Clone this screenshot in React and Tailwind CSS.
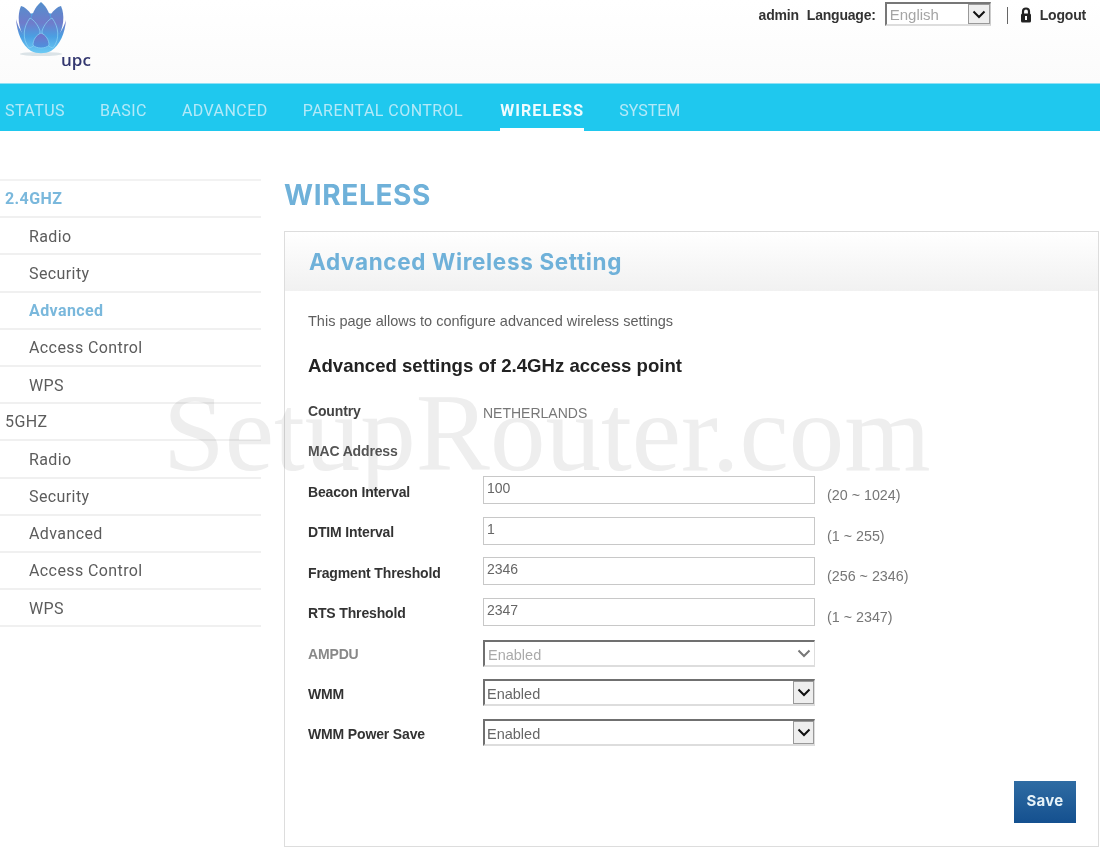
import { useState } from "react";

const navItems = ["STATUS", "BASIC", "ADVANCED", "PARENTAL CONTROL", "WIRELESS", "SYSTEM"];

const sideMenu = [
  { label: "2.4GHZ", top: true, active: true },
  { label: "Radio" },
  { label: "Security" },
  { label: "Advanced", active: true },
  { label: "Access Control" },
  { label: "WPS" },
  { label: "5GHZ", top: true },
  { label: "Radio" },
  { label: "Security" },
  { label: "Advanced" },
  { label: "Access Control" },
  { label: "WPS" },
];

const inputs = [
  { label: "Beacon Interval", value: "100", hint: "(20 ~ 1024)" },
  { label: "DTIM Interval", value: "1", hint: "(1 ~ 255)" },
  { label: "Fragment Threshold", value: "2346", hint: "(256 ~ 2346)" },
  { label: "RTS Threshold", value: "2347", hint: "(1 ~ 2347)" },
];

function Logo() {
  return (
    <svg width="68" height="60" viewBox="0 0 68 60" className="block">
      <defs>
        <linearGradient id="petal" gradientUnits="userSpaceOnUse" x1="0" y1="0" x2="0" y2="52">
          <stop offset="0" stopColor="#5190cc" />
          <stop offset="0.42" stopColor="#6f7ccb" />
          <stop offset="0.68" stopColor="#4a9fe2" />
          <stop offset="1" stopColor="#6ccaf4" />
        </linearGradient>
        <linearGradient id="front" x1="0" y1="0" x2="0" y2="1">
          <stop offset="0" stopColor="#7470c8" />
          <stop offset="1" stopColor="#4b92de" />
        </linearGradient>
      </defs>
      <ellipse cx="25" cy="53" rx="21" ry="2" fill="#dbe3e7" />
      {/* fill between the petals */}
      <path d="M7 16C12 10 38 10 43 16C47 28 40 46 25 50C10 46 3 28 7 16Z" fill="#4f9fe0" />
      {/* outer tips and cup */}
      <path d="M0 18C1 32 6 44 15 50C21 53 29 53 35 50C44 44 49 32 50 19C47 29 41 40 25 44C9 40 3 29 0 18Z" fill="url(#petal)" />
      {/* back petals */}
      <path d="M25 1C19 6 15 14 15 22C15 30 20 36 25 36C30 36 35 30 35 22C35 14 31 6 25 1Z" fill="url(#petal)" />
      <path d="M5 5C1 14 2 27 9 38C14 36 16 22 15 13C12 9 9 6 5 5Z" fill="url(#petal)" />
      <path d="M45 5C49 14 48 27 41 38C36 36 34 22 35 13C38 9 41 6 45 5Z" fill="url(#petal)" />
      {/* middle petals */}
      <path d="M14 17C7 26 6 38 13 47C19 46 24 38 24 30C22 24 18 19 14 17Z" fill="url(#petal)" stroke="#85cef3" strokeWidth="0.8" />
      <path d="M36 17C43 26 44 38 37 47C31 46 26 38 26 30C28 24 32 19 36 17Z" fill="url(#petal)" stroke="#85cef3" strokeWidth="0.8" />
      {/* front petal */}
      <path d="M25 32C20 34 17 39 17 44C20 48 30 48 33 44C33 39 30 34 25 32Z" fill="url(#front)" stroke="#85cef3" strokeWidth="0.8" />
    </svg>
  );
}

function SelectArrow({ disabled }) {
  return (
    <svg width="14" height="9" viewBox="0 0 14 9">
      <path d="M1.5 1.5L7 7L12.5 1.5" fill="none" stroke={disabled ? "#777" : "#111"} strokeWidth="2" />
    </svg>
  );
}

function Select({ value, disabled }) {
  return (
    <div className="flex h-[27px] w-[332px] items-stretch border-t-2 border-l-2 border-t-[#707070] border-l-[#707070] border-r border-b-2 border-r-[#ddd] border-b-[#ddd] bg-white">
      <span className={`flex-1 pt-[4px] text-[14.5px] leading-[18px] ${disabled ? "pl-[3px] text-[#aaa]" : "pl-[2px] text-[#666]"}`}>
        {value}
      </span>
      <span className={`flex w-[21px] items-center justify-center ${disabled ? "" : "border border-[#999] bg-[#eee]"}`}>
        <SelectArrow disabled={disabled} />
      </span>
    </div>
  );
}

export default function App() {
  const [beacon] = useState("100");
  return (
    <div className="relative h-[847px] w-[1100px] overflow-hidden bg-white font-['Liberation_Sans',sans-serif]">
      {/* header */}
      <header className="flex h-[83px] justify-between bg-gradient-to-b from-white to-[#fbfbfb]">
        <div className="relative ml-[16px] mt-[1px]">
          <Logo />
          <span className="absolute left-[45px] top-[49px] font-['Open_Sans',sans-serif] text-[17px] font-semibold leading-[20px] text-[#33376f]">
            upc
          </span>
        </div>
        <div className="mr-[14px] mt-[2px] flex h-[26px] items-center text-[14px] font-bold tracking-[-0.2px] text-[#333]">
          <span>admin</span>
          <span className="ml-[8px]">Language:</span>
          <div className="mb-[2px] ml-[9px] flex h-[24px] w-[106px] items-stretch border-t-2 border-l-2 border-t-[#777] border-l-[#777] border-r border-b-2 border-r-[#ccc] border-b-[#ddd] bg-white">
            <span className="flex-1 pl-[3px] pt-[2px] text-[15px] font-normal leading-[18px] tracking-normal text-[#a5a5a5]">English</span>
            <span className="flex w-[22px] items-center justify-center border border-[#999] bg-[#eee]">
              <SelectArrow />
            </span>
          </div>
          <span className="ml-[16px] h-[17px] w-px bg-[#666]" />
          <svg width="12" height="16" viewBox="0 0 12 16" className="mb-[1px] ml-[12px]">
            <path d="M3 7V4.5a3 3 0 0 1 6 0V7" fill="none" stroke="#222" strokeWidth="2.2" />
            <rect x="1" y="6.5" width="10" height="9" rx="1.5" fill="#222" />
            <rect x="5" y="9" width="2" height="4" fill="#fff" />
          </svg>
          <span className="ml-[8px]">Logout</span>
        </div>
      </header>

      {/* main nav */}
      <nav className="flex h-[48px] items-stretch border-t border-[#8fe0f5] bg-[#1fc8ee] pl-[5px] font-['Roboto',sans-serif] text-[16px] tracking-[0.45px] text-[#b4e9f8]">
        {navItems.map((item) => (
          <span
            key={item}
            className={`mr-[35px] flex items-center ${item === "WIRELESS" ? "ml-[2px] border-b-[3px] border-white pt-[10px] font-bold tracking-[1.1px] text-[#eefbfe]" : "pt-[7px]"} ${item === "SYSTEM" ? "tracking-[0px]" : ""}`}
          >
            {item}
          </span>
        ))}
      </nav>

      <div className="flex pt-[48px]">
        {/* side menu */}
        <aside className="w-[261px] shrink-0 border-t-2 border-[#f2f2f2] font-['Roboto',sans-serif] text-[16px] tracking-[0.4px] text-[#5c5c5c]">
          {sideMenu.map((item, i) => (
            <div
              key={i}
              className={`flex h-[37.2px] items-center border-b-2 border-[#f0f0f0] ${item.top ? "pl-[5px]" : "pl-[29px] pt-[2px]"} ${item.active ? "font-bold text-[#7ab8dc]" : ""}`}
            >
              {item.label}
            </div>
          ))}
        </aside>

        {/* content */}
        <main className="ml-[23px] mr-[1px] flex-1">
          <h1 className="mb-[20px] flex h-[32px] items-center font-['Inter',sans-serif] text-[28px] font-bold tracking-[0.65px] text-[#6fb1d9]">
            WIRELESS
          </h1>
          <section className="h-[616px] border border-[#ddd] bg-white">
            <div className="flex h-[59px] items-center bg-gradient-to-b from-white to-[#f1f1f1] pl-[24px] font-['Inter',sans-serif] text-[22.5px] font-bold tracking-[0.65px] text-[#6fb1d9]">
              Advanced Wireless Setting
            </div>
            <div className="relative pl-[23px] pr-[22px]">
              <p className="mt-[21px] text-[14.5px] leading-[18px] text-[#5f5f5f]">
                This page allows to configure advanced wireless settings
              </p>
              <h2 className="mt-[25px] text-[18.6px] font-bold leading-[22px] text-[#222]">
                Advanced settings of 2.4GHz access point
              </h2>

              <div className="mt-[25px] flex h-[20px] items-center">
                <span className="mt-[-2px] w-[175px] text-[14px] font-bold tracking-[-0.15px] text-[#444]">Country</span>
                <span className="mt-[2px] text-[14px] text-[#777]">NETHERLANDS</span>
              </div>
              <div className="mt-[19px] flex h-[20px] items-center">
                <span className="w-[175px] text-[14px] font-bold tracking-[-0.15px] text-[#555]">MAC Address</span>
              </div>

              <div className="mt-[15px] flex flex-col gap-[12.5px]">
                {inputs.map((f) => (
                  <div key={f.label} className="flex h-[28px] items-center">
                    <span className="mt-[4px] w-[175px] text-[14px] font-bold tracking-[-0.15px] text-[#333]">{f.label}</span>
                    <input
                      readOnly
                      value={f.label === "Beacon Interval" ? beacon : f.value}
                      className="h-[28px] w-[332px] border border-[#c8c8c8] bg-white px-[3px] pb-[4px] text-[14px] text-[#666] outline-none"
                    />
                    <span className="ml-[12px] mt-[12px] text-[14.3px] text-[#777]">{f.hint}</span>
                  </div>
                ))}
              </div>

              <div className="mt-[14px] flex flex-col gap-[12.5px]">
                <div className="flex items-center">
                  <span className="mt-[2px] w-[175px] text-[14px] font-bold tracking-[-0.15px] text-[#888]">AMPDU</span>
                  <Select value="Enabled" disabled />
                </div>
                <div className="flex items-center">
                  <span className="mt-[4px] w-[175px] text-[14px] font-bold tracking-[-0.15px] text-[#333]">WMM</span>
                  <Select value="Enabled" />
                </div>
                <div className="flex items-center">
                  <span className="mt-[4px] w-[175px] text-[14px] font-bold tracking-[-0.15px] text-[#333]">WMM Power Save</span>
                  <Select value="Enabled" />
                </div>
              </div>

              <div className="mt-[35px] flex justify-end">
                <button className="h-[42px] w-[62px] bg-gradient-to-b from-[#2f6ca3] to-[#14508f] font-['Inter',sans-serif] text-[15px] font-bold tracking-[0.3px] text-[#e6f2f8]">
                  Save
                </button>
              </div>
            </div>
          </section>
        </main>
      </div>

      {/* watermark */}
      <div className="pointer-events-none absolute left-[163px] top-[373px] font-['Liberation_Serif',serif] text-[111px] leading-[120px] text-[#eeeeee] mix-blend-multiply">
        SetupRouter.com
      </div>
    </div>
  );
}
